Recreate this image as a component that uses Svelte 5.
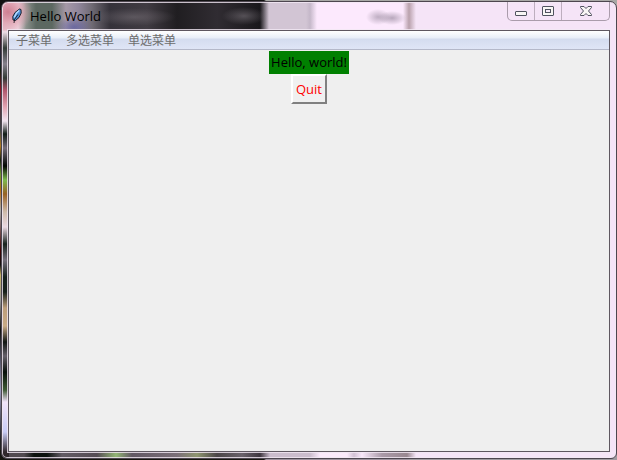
<script>
  const menus = ['子菜单', '多选菜单', '单选菜单'];
  const title = 'Hello World';
  let open = $state(true);
</script>

<div class="desktop">
  <section class="window" aria-label={title}>
    <header class="titlebar">
      <svg class="feather" viewBox="0 0 12 16" width="12" height="16" aria-hidden="true">
        <path d="M8.500 1L10 1.500L10.200 5L8 9.500L4.500 12.500L2 12L1.800 8.500L4 4.500Z" fill="#4f8fd8" stroke="#10141c" stroke-width=".9" />
        <path d="M8.200 2.500L5.500 5L3.200 9.500" fill="none" stroke="#b5dcff" stroke-width="1.500" />
        <path d="M7 6.500L3.500 11.500L3 15" fill="none" stroke="#05080e" stroke-width=".8" />
      </svg>
      <h1>{title}</h1>
      <div class="controls">
        <button type="button" aria-label="Minimize">
          <svg viewBox="0 0 14 11" width="14" height="11">
            <rect x="1.500" y="6.500" width="11" height="4" rx=".5" fill="#f8f6f4" stroke="#50535f" />
          </svg>
        </button>
        <button type="button" aria-label="Maximize">
          <svg viewBox="0 0 14 11" width="14" height="11">
            <rect x="1.500" y="1.500" width="11" height="9" rx=".5" fill="#f8f6f4" stroke="#50535f" />
            <rect x="4.500" y="4.500" width="5" height="3" fill="#f5e9f6" stroke="#50535f" />
          </svg>
        </button>
        <button type="button" class="close" aria-label="Close">
          <svg viewBox="0 0 14 11" width="14" height="11">
            <path d="M1.500 1.500H5L7 3.500L9 1.500H12.500V2.500L9.500 6L12.500 9.500V10.500H9L7 8.500L5 10.500H1.500V9.500L4.500 6L1.500 2.500Z" fill="#f8f6f4" stroke="#50535f" />
          </svg>
        </button>
      </div>
    </header>

    <div class="client">
      <nav class="menubar">
        {#each menus as menu}
          <button type="button">{menu}</button>
        {/each}
      </nav>
      <main>
        {#if open}
          <p>Hello, world!</p>
          <button type="button" class="quit" onclick={() => (open = false)}>Quit</button>
        {/if}
      </main>
    </div>
  </section>
</div>

<style>
  :global(body) {
    margin: 0;
  }

  .desktop {
    box-sizing: border-box;
    display: flex;
    min-height: 100vh;
    padding: 1px 0 1px 1px;
    background:
      linear-gradient(90deg, #15150f 0 264px, #9b919d 266px 408px, #9f9ba0 410px) bottom / 100% 10px no-repeat,
      linear-gradient(90deg, #111 0 264px, #a9a9a6 266px) top / 100% 10px no-repeat,
      linear-gradient(#600d20 0 24px, #182838 60px, #102010 70px, #8d1428 90px, #59303a 104px, #3d4548 130px, #b07a20 146px, #142010 160px, #6c9a30 174px, #b86e10 190px, #aaa 210px, #400 250px, #111 265px, #c5b060 275px, #999 300px, #111 330px, #99b 390px, #222 440px);
    font-family: "Open Sans", "Noto Sans CJK SC", sans-serif;
    font-size: 13px;
  }

  .window {
    box-sizing: border-box;
    display: flex;
    flex: 1;
    flex-direction: column;
    min-width: 0;
    padding: 0 6px 6px;
    border: 1px solid #4d464f;
    border-radius: 7px 7px 6px 6px;
    box-shadow: inset 0 0 0 1px #f3e9f4cc;
    background:
      radial-gradient(ellipse 24px 22px at 6px 10px, #cf7f92 0, #e0a3b2cc 50%, transparent) left top / 40px 29px no-repeat,
      linear-gradient(transparent 27px, #eddde6 30px, #333b37 46px, #85808c 62px, #343b36 76px, #b0566c 88px, #e2a4b2 105px, #f2e4ef 119px, #111c17 132px, #756c78 146px, #020602 164px, #7dba4d 178px, #986224 192px, #cfbbaa 210px, #ebd8e1 225px, #17231d 242px, #766f7b 258px, #15201b 275px, #17201b 290px, #bd9e7b 306px, #c8aa86 324px, #101512 340px, #66606a 354px, #07100a 370px, #3f5a35 388px, #f2e4fa 400px, #c8cbf5 430px, #30272b 450px) left top / 7px 100% no-repeat,
      linear-gradient(90deg, #514a50 0 22px, #0b110d 32px 45px, #625b64 60px, #554c54 95px, #93b675 114px, #625864 130px, #7b6f78 175px, #8f9670 195px, #4b4547 215px, #6a626b 240px, #3d353e 258px, #cbbdcd 268px 308px, #fbeafb 318px 345px, #d2c1d4 352px, #f9e8fa 360px, #aa9aa8 380px, #988790 405px, #f5e5f7 414px) left bottom / 100% 7px no-repeat,
      radial-gradient(ellipse 12px 8px at 376px 15px, #8a7b9088, transparent) left top / 403px 29px no-repeat,
      radial-gradient(ellipse 14px 7px at 390px 16px, #8a7b9099, transparent) left top / 408px 29px no-repeat,
      radial-gradient(ellipse 22px 9px at 242px 14px, #77717899, transparent) left top / 100% 29px no-repeat,
      radial-gradient(ellipse 42px 9px at 132px 15px, #79727988, transparent) left top / 100% 29px no-repeat,
      radial-gradient(ellipse 18px 10px at 72px 25px, #5557a0aa, transparent) left top / 100% 29px no-repeat,
      linear-gradient(90deg, #e5bbc7 0, #f3dce6 16px, #8b918c 24px, #5c6861 34px 50px, #a598a7 64px, #91879c 76px, #6f6a73 90px, #35323a 108px, #403b42 145px, #201e21 175px, #302c32 215px, #19171b 258px, #d2c5d4 267px 304px, #c5b8c9 308px, #fce9fd 315px 401px, #b9a1ac 407px, #f5e4f7 414px);
  }

  .titlebar {
    display: flex;
    align-items: flex-start;
    height: 28px;
    padding-left: 3px;
  }

  .feather {
    flex: none;
    margin-top: 6px;
  }

  h1 {
    flex: 1;
    margin: 5px 0 0 7px;
    font-size: 13px;
    font-weight: 400;
    line-height: 18px;
    color: #000;
  }

  .controls {
    display: flex;
    height: 18px;
    border: 1px solid #aa9cab;
    border-top: 0;
    border-radius: 0 0 5px 5px;
  }

  .controls button {
    display: flex;
    align-items: flex-start;
    justify-content: center;
    box-sizing: border-box;
    width: 27px;
    padding: 3px 0 0;
    border: 0;
    border-right: 1px solid #bdaebe;
    background: none;
  }

  .controls .close {
    width: 47px;
    border-right: 0;
  }

  .client {
    display: flex;
    flex: 1;
    flex-direction: column;
    border: 1px solid #5e5760;
    outline: 1px solid #f3e9f4cc;
    background: #efefef;
  }

  .menubar {
    display: flex;
    height: 18px;
    border-bottom: 1px solid #b4b8c9;
    background: linear-gradient(#fff, #e8eef8 7px, #d4dcef 8px, #dfe5f6);
  }

  .menubar button {
    padding: 0 7px;
    border: 0;
    background: none;
    font: 12px/18px "Noto Sans CJK SC", sans-serif;
    color: #6d6d6d;
  }

  main {
    display: flex;
    flex: 1;
    flex-direction: column;
    align-items: center;
    padding-top: 1px;
  }

  p {
    margin: 0;
    padding: 0 2px;
    background: #008000;
    line-height: 23px;
    color: #000;
  }

  .quit {
    height: 30px;
    padding: 0 3px;
    border: 2px solid;
    border-color: #fff #808080 #808080 #fff;
    background: #f0f0f0;
    font: inherit;
    color: #f00;
  }
</style>
